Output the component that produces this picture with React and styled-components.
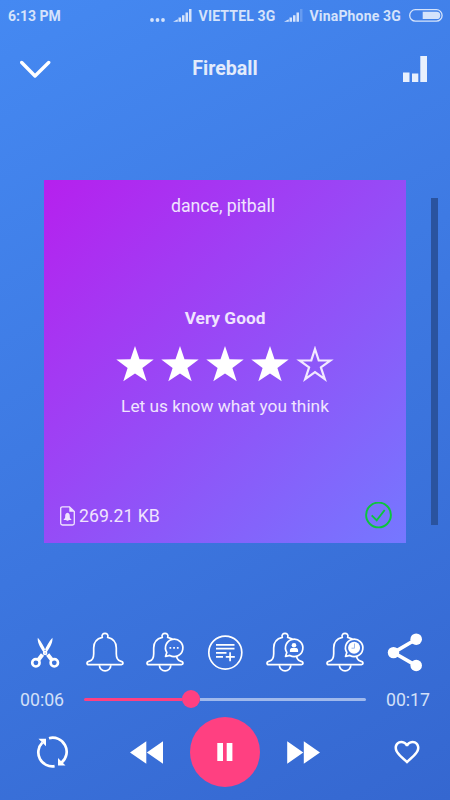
import React from "react";
import styled, { createGlobalStyle } from "styled-components";

const GlobalStyle = createGlobalStyle`
  * {
    box-sizing: border-box;
  }

  body {
    margin: 0;
    font-family: Roboto, "Liberation Sans", sans-serif;
  }

  svg {
    display: block;
    flex: none;
  }
`;

const Screen = styled.div`
  width: 450px;
  height: 800px;
  overflow: hidden;
  display: flex;
  flex-direction: column;
  color: #e3ebfb;
  background: linear-gradient(151deg, #4589f2 0%, #3567d0 100%);
`;

const StatusBar = styled.div`
  height: 32px;
  padding: 0 7px 1px 8px;
  display: flex;
  align-items: center;
  justify-content: space-between;
  font-size: 14px;
  font-weight: 700;
  color: #d5e3fb;
`;

const StatusGroup = styled.div`
  display: flex;
  align-items: center;
`;

const Carrier = styled.span`
  margin: 0 8px 0 7px;
  letter-spacing: 0.17px;
  white-space: nowrap;
`;

const Header = styled.header`
  height: 72px;
  padding: 0 20px;
  display: grid;
  grid-template-columns: 60px 1fr 60px;
  align-items: center;
`;

const Title = styled.h1`
  margin: 0;
  font-size: 19.6px;
  font-weight: 700;
  text-align: center;
`;

const IconButton = styled.button`
  padding: 0;
  border: 0;
  background: none;
  color: white;
  display: flex;
  align-items: center;
  justify-content: ${(props) => props.$align || "center"};
  cursor: pointer;
`;

const Stage = styled.main`
  height: 516px;
  padding: 76px 12px 0 44px;
  display: flex;
  justify-content: space-between;
`;

const Card = styled.section`
  width: 362px;
  height: 363px;
  padding: 14px 14px 14px 16px;
  display: grid;
  grid-template-rows: 24px 1fr 27px;
  color: #f0e4fe;
  font-size: 17.7px;
  line-height: 24px;
  background: linear-gradient(135deg, #b620ee 0%, #7578ff 100%);
`;

const Tags = styled.div`
  padding-right: 6px;
  text-align: center;
`;

const Rating = styled.div`
  margin: 88px 0 0 -2px;
  display: flex;
  flex-direction: column;
  align-items: center;
  font-size: 17.3px;
`;

const RatingLabel = styled.strong`
  font-weight: 700;
`;

const Stars = styled.div`
  margin: 16px 0 12px;
  display: flex;
  gap: 7px;
`;

const CardFooter = styled.div`
  display: flex;
  align-items: center;
  justify-content: space-between;
`;

const FileSize = styled.div`
  display: flex;
  align-items: center;
  gap: 4px;
`;

const NextCard = styled.div`
  width: 7px;
  height: 327px;
  margin-top: 18px;
  background: #2a539f;
`;

const Actions = styled.nav`
  height: 64px;
  padding: 0 15px;
  display: grid;
  grid-template-columns: repeat(7, 1fr);
`;

const Progress = styled.div`
  height: 30px;
  padding: 0 20px;
  display: grid;
  grid-template-columns: 64px 282px 64px;
  align-items: center;
  font-size: 17.7px;
`;

const Time = styled.span`
  padding-top: 2px;
  color: #d3e0f8;
  text-align: ${(props) => props.$align || "left"};
`;

const Track = styled.div`
  height: 18px;
  display: flex;
  align-items: center;
`;

const Played = styled.div`
  width: ${(props) => props.$width}px;
  height: 3px;
  border-radius: 2px 0 0 2px;
  background: #ff4081;
`;

const Thumb = styled.div`
  width: 18px;
  height: 18px;
  border-radius: 50%;
  background: #ff4081;
`;

const Remaining = styled.div`
  flex: 1;
  height: 3px;
  border-radius: 0 2px 2px 0;
  background: #a0b9ec;
`;

const Controls = styled.div`
  height: 76px;
  padding: 0 28px;
  display: grid;
  grid-template-columns: 42px 1fr 42px;
  align-items: center;
`;

const Transport = styled.div`
  display: flex;
  align-items: center;
  justify-content: center;
  gap: 26px;
`;

const PauseButton = styled(IconButton)`
  width: 70px;
  height: 70px;
  border-radius: 50%;
  background: #ff4081;
`;

const Signal = ({ weak }) => (
  <svg width="19" height="13" viewBox="0 0 19 13" fill="currentColor">
    <path d="M0 12.800l4.800-2.600v2.600zM5.500 8.600h2.500v4.200h-2.500zM9 6.200h2.500v6.600h-2.500zM12.500 3.400h2.500v9.400h-2.500z" />
    <path d="M16 0h2.500v12.800h-2.500z" opacity={weak ? 0.25 : 1} />
  </svg>
);

const Battery = () => (
  <svg width="34" height="13" viewBox="0 0 34 13">
    <rect x="0.700" y="0.700" width="32.400" height="11.400" rx="5.700" fill="none" stroke="currentColor" strokeWidth="1.300" />
    <path d="M13.700 2.700h13.900a3.700 3.700 0 0 1 0 7.400H13.700z" fill="currentColor" />
  </svg>
);

const Star = ({ filled }) => (
  <svg width="38" height="36" viewBox="0 0 38 36">
    {filled ? (
      <path d="M19 .1l4.500 13.100 14.200.3-11.300 8.500 4.300 13.200L19 27.400 7.300 35.200 11.600 22 .3 13.500l14.200-.3z" fill="white" />
    ) : (
      <path
        d="M19 3l3.700 11.300 11.700.2-9.500 6.900 3.900 11.700L19 26l-9.800 7.100 3.900-11.700-9.500-6.900 11.700-.2z"
        fill="none"
        stroke="#f2e9ff"
        strokeWidth="2.200"
      />
    )}
  </svg>
);

const Bell = ({ children }) => (
  <svg width="40" height="40" viewBox="0 0 40 40" fill="none" stroke="white" strokeWidth="1.700">
    <path d="M17.200 5.300C15.700 0 24.300 0 22.800 5.300c5.200 1.200 8.500 5.300 8.500 10.700v5.800c0 4.300 1.200 6.600 4.200 7.300 1.800.4 2.500 1.200 2.500 2.200q0 1.300-1.600 1.300H3.600Q2 32.600 2 31.300c0-1 .7-1.800 2.500-2.200 3-.7 4.200-3 4.200-7.300V16c0-5.400 3.300-9.500 8.500-10.700z" />
    <path d="M14.400 33.200a5.700 5.700 0 0 0 11.400 0" />
    {children}
  </svg>
);

const Bubble = ({ children }) => (
  <>
    <path d="M21.800 20.500l-1.300 4 4.300-1.100a8.700 8.700 0 1 0-3-2.900z" fill="#3c72dc" strokeLinejoin="round" />
    {children}
  </>
);

const actions = [
  {
    name: "Cut",
    icon: (
      <svg width="40" height="40" viewBox="0 0 40 40" fill="none" stroke="white">
        <circle cx="10.900" cy="30.800" r="3.700" strokeWidth="2.600" />
        <circle cx="29.300" cy="30.800" r="3.700" strokeWidth="2.600" />
        <path d="M13.500 27.700l4-5.200M26.700 27.700l-4-5.200" strokeWidth="4" />
        <path d="M12.800 5.800c-.6 4 1.500 8.500 6.200 15.200l2.200-1.200C18.800 14.500 16.300 9.500 12.800 5.800zM27.400 5.800c.6 4-1.500 8.500-6.200 15.200l-2.200-1.200C21.400 14.500 23.900 9.500 27.400 5.800z" fill="white" stroke="none" />
        <circle cx="20.100" cy="21" r="2.300" fill="white" stroke="none" />
        <circle cx="20.100" cy="21" r="0.500" fill="#3c72dc" stroke="none" />
      </svg>
    ),
  },
  { name: "Ringtone", icon: <Bell /> },
  {
    name: "Message sound",
    icon: (
      <Bell>
        <Bubble>
          <path d="M24.500 15.900h1.700M28.200 15.900h1.700M31.900 15.900h1.700" />
        </Bubble>
      </Bell>
    ),
  },
  {
    name: "Add to playlist",
    icon: (
      <svg width="40" height="40" viewBox="0 0 40 40" fill="none" stroke="white" strokeWidth="1.700">
        <circle cx="20.300" cy="20.600" r="16.500" />
        <path d="M11 12.800h18.500M11 16.600h18.500M11 20.800h10.500M11 24.800h7M20.800 24.800h9M25.100 20.300v9" />
      </svg>
    ),
  },
  {
    name: "Contact ringtone",
    icon: (
      <Bell>
        <Bubble>
          <circle cx="29" cy="13.300" r="2.300" fill="white" stroke="none" />
          <path d="M24.900 19.900v-1.500c0-1.800 1.200-2.400 2.600-2.400h3c1.400 0 2.600.6 2.600 2.400v1.500z" fill="white" stroke="none" />
        </Bubble>
      </Bell>
    ),
  },
  {
    name: "Alarm",
    icon: (
      <Bell>
        <Bubble>
          <circle cx="29.100" cy="15.700" r="6" fill="white" stroke="none" />
          <path d="M29.500 11.500v4.700h-3" stroke="#9db9ee" strokeWidth="1" />
        </Bubble>
      </Bell>
    ),
  },
  {
    name: "Share",
    icon: (
      <svg width="40" height="40" viewBox="0 0 40 40" fill="white">
        <path d="M31.200 7.200L8.500 20.600 31.200 33.600" fill="none" stroke="white" strokeWidth="3.600" />
        <circle cx="31.200" cy="7.200" r="5.800" />
        <circle cx="8.500" cy="20.600" r="5.700" />
        <circle cx="31.200" cy="33.500" r="5.800" />
      </svg>
    ),
  },
];

export default function App() {
  return (
    <>
      <GlobalStyle />
      <Screen>
        <StatusBar>
          <span>6:13 PM</span>
          <StatusGroup>
            <svg width="23" height="13" viewBox="0 0 23 13" fill="currentColor">
              <circle cx="2" cy="11" r="1.900" />
              <circle cx="7.500" cy="11" r="1.900" />
              <circle cx="13" cy="11" r="1.900" />
            </svg>
            <Signal />
            <Carrier>VIETTEL 3G</Carrier>
            <Signal weak />
            <Carrier>VinaPhone 3G</Carrier>
            <Battery />
          </StatusGroup>
        </StatusBar>

        <Header>
          <IconButton $align="flex-start" aria-label="Close player">
            <svg width="31" height="22" viewBox="0 0 31 22" fill="none" stroke="white" strokeWidth="3.400" strokeLinecap="round" strokeLinejoin="round">
              <path d="M1.700 5.500L15 19 28.700 5.500" />
            </svg>
          </IconButton>
          <Title>Fireball</Title>
          <IconButton $align="flex-end" aria-label="Popularity">
            <svg width="27" height="28" viewBox="0 0 27 28" fill="#e8f0fd">
              <path d="M0 18.500h6.500v9.500H0zM9 19.500h6.300v8.500H9zM17.300 2h6.700v26h-6.700z" />
            </svg>
          </IconButton>
        </Header>

        <Stage>
          <Card>
            <Tags>dance, pitball</Tags>
            <Rating>
              <RatingLabel>Very Good</RatingLabel>
              <Stars>
                {[1, 2, 3, 4, 5].map((value) => (
                  <Star key={value} filled={value <= 4} />
                ))}
              </Stars>
              <span>Let us know what you think</span>
            </Rating>
            <CardFooter>
              <FileSize>
                <svg width="15" height="20" viewBox="0 0 15 20">
                  <path d="M9.500.8H2.500Q.7.800.7 2.500v14.800q0 1.700 1.800 1.700h10q1.800 0 1.800-1.700V5.500z" fill="none" stroke="currentColor" strokeWidth="1.300" />
                  <path d="M9.300.8v5h5z" fill="currentColor" />
                  <path d="M7.500 6.800c-2 .3-2.300 1.800-2.300 3.600 0 1.500-.4 2.100-1.500 2.900v.6h7.600v-.6c-1.100-.8-1.500-1.400-1.500-2.900 0-1.800-.3-3.300-2.300-3.600zM6.500 14.300h2v.8h-2z" fill="currentColor" />
                </svg>
                <span>269.21 KB</span>
              </FileSize>
              <svg width="27" height="27" viewBox="0 0 27 27" fill="none" stroke="#0cc53c" strokeWidth="1.900">
                <circle cx="13.500" cy="13" r="12.400" />
                <path d="M6.700 13.300l5 5L19.700 8" />
              </svg>
            </CardFooter>
          </Card>
          <NextCard />
        </Stage>

        <Actions>
          {actions.map((action) => (
            <IconButton key={action.name} aria-label={action.name}>
              {action.icon}
            </IconButton>
          ))}
        </Actions>

        <Progress>
          <Time>00:06</Time>
          <Track>
            <Played $width={98} />
            <Thumb />
            <Remaining />
          </Track>
          <Time $align="right">00:17</Time>
        </Progress>

        <Controls>
          <IconButton $align="flex-end" aria-label="Repeat">
            <svg width="34" height="34" viewBox="0 0 34 34" fill="none" stroke="white" strokeWidth="2.700">
              <path d="M13 3.200A14 14 0 0 1 25.600 27.500M18.600 31.200A14 14 0 0 1 6.300 7.600" />
              <path d="M2.500 3.700h7.500v7.500zM22 23v7.500h7.500z" fill="white" stroke="none" />
            </svg>
          </IconButton>
          <Transport>
            <IconButton aria-label="Rewind">
              <svg width="34" height="24" viewBox="0 0 34 24" fill="white">
                <path d="M0 12.500L16.300 1.300v22.400zM16.800 12.500L33 1.300v22.400z" />
              </svg>
            </IconButton>
            <PauseButton aria-label="Pause">
              <svg width="16" height="18" viewBox="0 0 16 18" fill="white">
                <path d="M.3 0h5.700v18H.3zM9.700 0h5.700v18H9.700z" />
              </svg>
            </PauseButton>
            <IconButton aria-label="Fast forward">
              <svg width="34" height="24" viewBox="0 0 34 24" fill="white">
                <path d="M34 12.500L17.800 1.300v22.400zM17.300 12.500L1.200 1.300v22.400z" />
              </svg>
            </IconButton>
          </Transport>
          <IconButton $align="flex-end" aria-label="Favorite">
            <svg width="30" height="30" viewBox="0 0 24 24" fill="white">
              <path d="M16.500 3c-1.740 0-3.410.81-4.500 2.090C10.910 3.810 9.240 3 7.500 3 4.420 3 2 5.420 2 8.500c0 3.780 3.400 6.860 8.550 11.540L12 21.350l1.450-1.320C18.600 15.360 22 12.280 22 8.500 22 5.420 19.580 3 16.500 3zm-4.400 15.550l-.1.100-.1-.1C7.140 14.240 4 11.390 4 8.500 4 6.500 5.500 5 7.500 5c1.540 0 3.040.99 3.570 2.360h1.870C13.460 5.990 14.960 5 16.500 5c2 0 3.500 1.500 3.500 3.500 0 2.890-3.140 5.740-7.900 10.050z" />
            </svg>
          </IconButton>
        </Controls>
      </Screen>
    </>
  );
}
